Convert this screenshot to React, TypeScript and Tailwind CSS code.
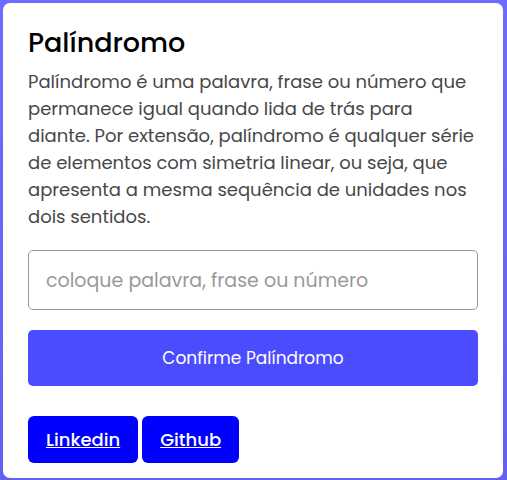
const linkClass =
  "inline-block rounded-md bg-[#0000ff] px-[18px] py-[10px] text-[18px] leading-[27px] font-medium text-white underline";

export default function App() {
  return (
    <div className="flex min-h-screen flex-col bg-linear-to-b from-[#6c6cff] to-[#6461ee] pt-[3px] pr-[4px] pb-[2px] pl-[3px] font-[Poppins,Lato,sans-serif]">
      <main className="grow rounded-[7px] bg-white px-[25px] pt-[19px] pb-[15px]">
        <h1 className="text-[27px] leading-[42px] font-medium text-black">Palíndromo</h1>
        <p className="mt-[4px] text-[18px] leading-[27px] text-[#474747]">
          Palíndromo é uma palavra, frase ou número que permanece igual quando lida de trás para
          diante. Por extensão, palíndromo é qualquer série de elementos com simetria linear, ou
          seja, que apresenta a mesma sequência de unidades nos dois sentidos.
        </p>
        <form className="mt-[20px]" onSubmit={(e) => e.preventDefault()}>
          <input
            type="text"
            aria-label="coloque palavra, frase ou número"
            placeholder="coloque palavra, frase ou número"
            className="block h-[60px] w-full rounded-[5px] border border-[#999] px-[17px] text-[19px] placeholder:text-[#999]"
          />
          <button
            type="submit"
            className="mt-[20px] block h-[56px] w-full rounded-[5px] bg-[#4c4cff] pt-[2px] text-[17px] text-white"
          >
            Confirme Palíndromo
          </button>
        </form>
        <nav className="mt-[30px] flex gap-[4px]">
          <a href="#linkedin" className={linkClass}>Linkedin</a>
          <a href="#github" className={linkClass}>Github</a>
        </nav>
      </main>
    </div>
  );
}
